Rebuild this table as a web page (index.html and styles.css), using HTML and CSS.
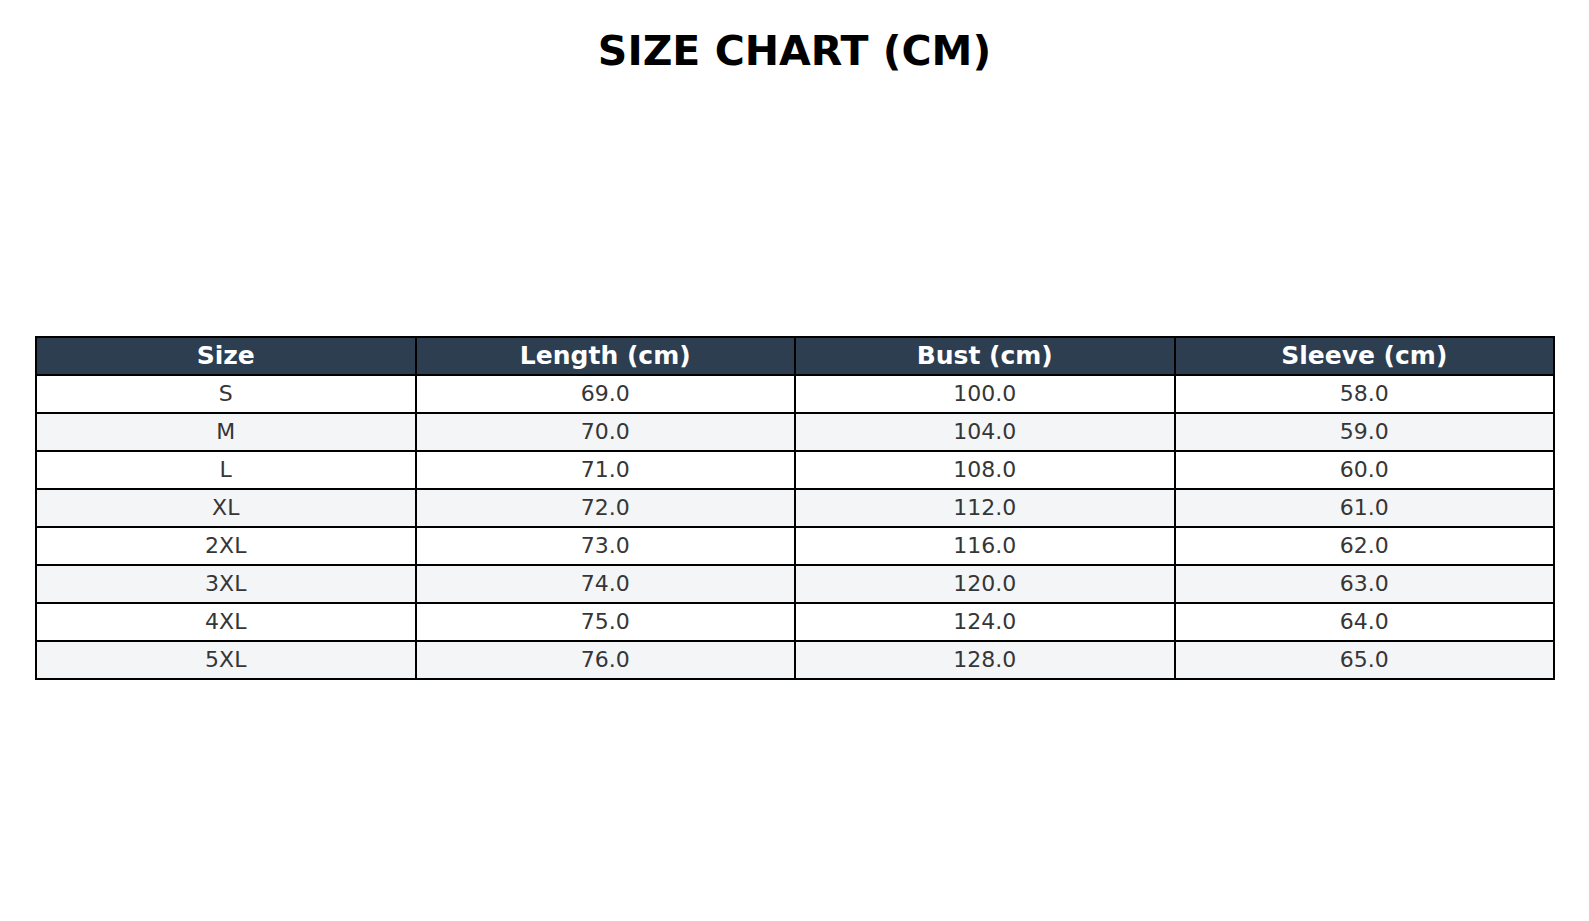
FILE: index.html
```html
<!DOCTYPE html>
<html lang="en">
<head>
<meta charset="utf-8">
<title>Size Chart (CM)</title>
<link rel="stylesheet" href="styles.css">
</head>
<body>
<main class="page">
  <h1 class="title">SIZE CHART (CM)</h1>
  <table class="chart">
    <thead>
      <tr><th>Size</th><th>Length (cm)</th><th>Bust (cm)</th><th>Sleeve (cm)</th></tr>
    </thead>
    <tbody>
      <tr><td>S</td><td>69.0</td><td>100.0</td><td>58.0</td></tr>
      <tr><td>M</td><td>70.0</td><td>104.0</td><td>59.0</td></tr>
      <tr><td>L</td><td>71.0</td><td>108.0</td><td>60.0</td></tr>
      <tr><td>XL</td><td>72.0</td><td>112.0</td><td>61.0</td></tr>
      <tr><td>2XL</td><td>73.0</td><td>116.0</td><td>62.0</td></tr>
      <tr><td>3XL</td><td>74.0</td><td>120.0</td><td>63.0</td></tr>
      <tr><td>4XL</td><td>75.0</td><td>124.0</td><td>64.0</td></tr>
      <tr><td>5XL</td><td>76.0</td><td>128.0</td><td>65.0</td></tr>
    </tbody>
  </table>
</main>
</body>
</html>
```
FILE: styles.css
```css
html, body {
  margin: 0;
  padding: 0;
  background: #ffffff;
}
body {
  font-family: "DejaVu Sans", "Liberation Sans", sans-serif;
  color: #000;
}
.page {
  width: 1589px;
  height: 921px;
  overflow: hidden;
}
.title {
  margin: 0;
  padding-top: 28px;
  font-size: 41px;
  line-height: 46px;
  font-weight: bold;
  text-align: center;
  color: #000;
}
.chart {
  margin: 262px 0 0 35px;
  width: 1520px;
  table-layout: fixed;
  border-collapse: separate;
  border-spacing: 0;
  border-top: 2px solid #000;
  border-left: 2px solid #000;
}
.chart th,
.chart td {
  height: 36px;
  padding: 0;
  border-right: 2px solid #000;
  border-bottom: 2px solid #000;
  text-align: center;
  vertical-align: middle;
  line-height: 36px;
  box-sizing: content-box;
}
.chart th {
  background: #2c3e50;
  color: #ffffff;
  font-weight: bold;
  font-size: 25px;
}
.chart td {
  font-size: 22px;
  color: #363636;
  background: #ffffff;
}
.chart tbody tr:nth-child(even) td {
  background: #f4f5f7;
}
```
